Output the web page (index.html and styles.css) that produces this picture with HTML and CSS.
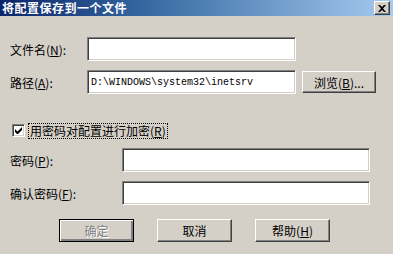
FILE: index.html
```html
<!DOCTYPE html>
<html lang="zh-CN">
<head>
    <meta charset="UTF-8">
    <title>将配置保存到一个文件</title>
    <link rel="stylesheet" href="styles.css">
</head>
<body>
    <div class="dialog">
        <div class="titlebar">
            <span class="title">将配置保存到一个文件</span>
            <button type="button" class="close-btn">
                <svg width="8" height="7" viewBox="0 0 8 7"><path d="M0 0h2l2 2 2-2h2L5 3.5 8 7H6L4 5 2 7H0l3-3.5z" fill="#000"/></svg>
            </button>
        </div>

        <div class="content">
            <div class="row row-file">
                <label class="label">文件名(<u>N</u>):</label>
                <input type="text" class="field field-short">
            </div>

            <div class="row row-path">
                <label class="label">路径(<u>A</u>):</label>
                <input type="text" class="field field-short mono" value="D:\WINDOWS\system32\inetsrv">
                <button type="button" class="btn btn-browse">浏览(<u>B</u>)...</button>
            </div>

            <div class="row row-check">
                <span class="checkbox">
                    <svg width="7" height="7" viewBox="0 0 7 7"><path d="M0 2v3l2 2h1l4-4V0L2.5 4.5z" fill="#000"/></svg>
                </span>
                <span class="check-label">用密码对配置进行加密(<u>R</u>)</span>
            </div>

            <div class="row row-pass">
                <label class="label label-wide">密码(<u>P</u>):</label>
                <input type="password" class="field field-long">
            </div>

            <div class="row row-confirm">
                <label class="label label-wide">确认密码(<u>F</u>):</label>
                <input type="password" class="field field-long">
            </div>

            <div class="button-group">
                <button type="button" class="btn btn-default" disabled>确定</button>
                <button type="button" class="btn">取消</button>
                <button type="button" class="btn">帮助(<u>H</u>)</button>
            </div>
        </div>
    </div>
</body>
</html>
```

FILE: styles.css
```css
body {
    margin: 0;
    background: #d4d0c8;
    font-family: "Noto Sans CJK SC", "DejaVu Sans", sans-serif;
    font-size: 12px;
    color: #000;
}
.dialog {
    width: 393px;
    height: 254px;
    overflow: hidden;
}
.titlebar {
    height: 16px;
    display: flex;
    align-items: center;
    justify-content: space-between;
    padding: 0 3px 0 2px;
    background: linear-gradient(to right, #0a246a 0%, #3a6ea5 40%, #a6caf0 100%);
}
.title {
    color: #fff;
    font-weight: bold;
    font-size: 12px;
    line-height: 1;
    letter-spacing: 0.5px;
}
.close-btn {
    width: 16px;
    height: 14px;
    padding: 0;
    margin: 0;
    display: flex;
    align-items: center;
    justify-content: center;
    background: #d4d0c8;
    border: 1px solid;
    border-color: #fff #404040 #404040 #fff;
    box-shadow: inset -1px -1px #808080;
}
.content {
    padding: 21px 0 0 10px;
}
.row {
    display: flex;
    align-items: center;
}
.row-path {
    margin-top: 9px;
}
.row-check {
    margin-top: 30px;
    padding-left: 2px;
    height: 13px;
}
.row-pass {
    margin-top: 11px;
}
.row-confirm {
    margin-top: 9px;
}
.label {
    width: 77px;
    flex: none;
    white-space: nowrap;
}
.label-wide {
    width: 112px;
}
.field {
    box-sizing: border-box;
    height: 24px;
    padding: 0 3px;
    margin: 0;
    background: #fff;
    border: 1px solid;
    border-color: #808080 #fff #fff #808080;
    box-shadow: inset 1px 1px #404040, inset -1px -1px #d4d0c8;
    outline: none;
    font-family: "Noto Sans CJK SC", sans-serif;
    font-size: 12px;
}
.field-short {
    width: 209px;
}
.field-long {
    width: 248px;
}
.mono {
    font-family: "Liberation Mono", "DejaVu Sans Mono", monospace;
    font-size: 10px;
    color: #000;
}
.btn {
    box-sizing: border-box;
    width: 75px;
    height: 23px;
    padding: 0;
    background: #d4d0c8;
    border: 1px solid;
    border-color: #fff #404040 #404040 #fff;
    box-shadow: inset -1px -1px #808080;
    font-family: "Noto Sans CJK SC", sans-serif;
    font-size: 12px;
    color: #000;
}
.btn-browse {
    width: 74px;
    height: 22px;
    margin-left: 6px;
}
.btn-default {
    border: 1px solid #000;
    box-shadow: inset 1px 1px #fff, inset -2px -2px #808080, inset -1px -1px #404040;
    color: #808080;
    text-shadow: 1px 1px #fff;
}
.checkbox {
    box-sizing: border-box;
    width: 13px;
    height: 13px;
    display: flex;
    align-items: center;
    justify-content: center;
    background: #fff;
    border: 1px solid;
    border-color: #808080 #fff #fff #808080;
    box-shadow: inset 1px 1px #404040, inset -1px -1px #d4d0c8;
}
.check-label {
    margin-left: 3px;
    padding: 0 1px;
    line-height: 14px;
    border: 1px dotted #000;
}
.button-group {
    display: flex;
    gap: 23px;
    margin-top: 14px;
    padding-left: 49px;
}
```
